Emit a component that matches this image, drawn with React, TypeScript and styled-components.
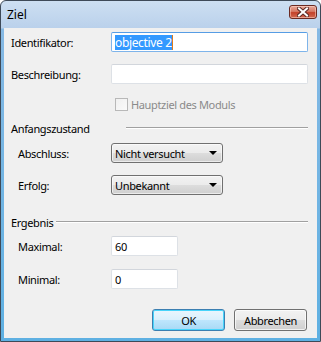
import React from "react";
import styled, { createGlobalStyle } from "styled-components";

const Global = createGlobalStyle`
  html, body { margin: 0; padding: 0; background: #fff; }
  body { font-family: "Noto Sans", "Segoe UI", sans-serif; font-size: 11px; letter-spacing: -0.35px; color: #000; }
  * { box-sizing: border-box; }
`;

const Window = styled.div`
  width: 321px;
  height: 342px;
  border: 1px solid #3e4a58;
  border-radius: 6px 6px 0 0;
  padding: 0 3px 3px 3px;
  display: flex;
  flex-direction: column;
  background: linear-gradient(to bottom, #cddff2 0px, #bad1eb 27px, #86b9e4 28px, #5eb0e2 100%);
`;

const TitleBar = styled.div`
  height: 27px;
  display: flex;
  justify-content: space-between;
  align-items: flex-start;
  padding-left: 3px;
`;

const Title = styled.span`
  font-size: 12px;
  letter-spacing: 0;
  line-height: 27px;
  color: #000;
`;

const CloseButton = styled.div`
  margin-top: 4px;
  width: 28px;
  height: 14px;
  border: 1px solid #6b2a22;
  border-radius: 3px;
  background: linear-gradient(to bottom, #e9a898 0%, #d67a66 45%, #c3412a 55%, #d26a52 100%);
  display: flex;
  align-items: center;
  justify-content: center;
  box-shadow: inset 0 0 0 1px rgba(255, 220, 210, 0.5);
`;

const Content = styled.div`
  flex: 1;
  background: #f0f0f0;
  padding: 4px 9px 0 7px;
  display: flex;
  flex-direction: column;
`;

const Row = styled.div<{ $mt: number; $indent?: number }>`
  display: flex;
  align-items: center;
  margin-top: ${(p) => p.$mt}px;
  padding-left: ${(p) => p.$indent || 0}px;
`;

const Label = styled.span<{ $w: number }>`
  width: ${(p) => p.$w}px;
  flex-shrink: 0;
  white-space: nowrap;
`;

const TextBox = styled.div<{ $w: number; $focus?: boolean }>`
  width: ${(p) => p.$w}px;
  height: 20px;
  background: #fff;
  border: 1px solid ${(p) => (p.$focus ? "#7eb4ea" : "#dde1e6")};
  border-top-color: ${(p) => (p.$focus ? "#569de5" : "#d2d6dc")};
  border-radius: 2px;
  display: flex;
  align-items: center;
  padding-left: 3px;
`;

const Selected = styled.span`
  background: #3399ff;
  color: #fff;
  line-height: 15px;
  border-right: 1px solid #e07b1a;
  font-size: 12px;
`;

const Plain = styled.span`
  font-size: 11px;
`;

const CheckRow = styled.div`
  display: flex;
  align-items: center;
  margin-top: 14px;
  padding-left: 104px;
  height: 13px;
  color: #8a8a8a;
`;

const CheckBox = styled.span`
  width: 13px;
  height: 13px;
  border: 1px solid #b8b8b8;
  background: linear-gradient(135deg, #f0f0f0, #fafafa);
  margin-right: 3px;
`;

const SectionRow = styled.div<{ $mt: number }>`
  display: flex;
  align-items: center;
  height: 16px;
  margin-top: ${(p) => p.$mt}px;
`;

const SectionLabel = styled.span<{ $w?: number }>`
  white-space: nowrap;
  ${(p) => (p.$w ? `width: ${p.$w}px;` : "margin-right: 3px;")}
  flex-shrink: 0;
`;

const Rule = styled.div`
  flex: 1;
  height: 2px;
  border-top: 1px solid #a0a0a0;
  border-bottom: 1px solid #ffffff;
  margin-top: -1px;
`;

const Combo = styled.div`
  width: 112px;
  height: 20px;
  border: 1px solid #707070;
  border-radius: 3px;
  background: linear-gradient(to bottom, #f2f2f2 0%, #ebebeb 50%, #dddddd 51%, #cfcfcf 100%);
  display: flex;
  align-items: center;
  justify-content: space-between;
  padding: 0 4px 0 3px;
  box-shadow: inset 0 0 0 1px rgba(255, 255, 255, 0.6);
`;

const Arrow = styled.span`
  width: 0;
  height: 0;
  border-left: 4px solid transparent;
  border-right: 4px solid transparent;
  border-top: 4px solid #000;
  margin-right: 1px;
`;

const ButtonRow = styled.div`
  display: flex;
  justify-content: flex-end;
  gap: 9px;
  margin-top: 20px;
  padding-right: 1px;
`;

const Button = styled.div<{ $default?: boolean }>`
  width: 73px;
  height: 22px;
  border: 1px solid ${(p) => (p.$default ? "#3c7fb1" : "#707070")};
  border-radius: 3px;
  display: flex;
  align-items: center;
  justify-content: center;
  background: ${(p) =>
    p.$default
      ? "linear-gradient(to bottom, #eaf6fd 0%, #d9f0fc 50%, #bee6fd 51%, #a7d9f5 100%)"
      : "linear-gradient(to bottom, #f2f2f2 0%, #ebebeb 50%, #dddddd 51%, #cfcfcf 100%)"};
  box-shadow: inset 0 0 0 1px ${(p) => (p.$default ? "#48d4fa" : "rgba(255,255,255,0.7)")};
`;

export default function App() {
  return (
    <>
      <Global />
      <Window>
        <TitleBar>
          <Title>Ziel</Title>
          <CloseButton>
            <svg width="12" height="10" viewBox="0 0 12 10">
              <path d="M2 1.5 L10 8.5 M10 1.5 L2 8.5" stroke="#5a2a26" strokeWidth="4" strokeLinecap="square" />
              <path d="M2 1.5 L10 8.5 M10 1.5 L2 8.5" stroke="#ffffff" strokeWidth="2" strokeLinecap="square" />
            </svg>
          </CloseButton>
        </TitleBar>
        <Content>
          <Row $mt={0}>
            <Label $w={100}>Identifikator:</Label>
            <TextBox $w={200} $focus>
              <Selected>objective 2</Selected>
            </TextBox>
          </Row>
          <Row $mt={12}>
            <Label $w={100}>Beschreibung:</Label>
            <TextBox $w={200} />
          </Row>
          <CheckRow>
            <CheckBox />
            Hauptziel des Moduls
          </CheckRow>
          <SectionRow $mt={9}>
            <SectionLabel $w={115}>Anfangszustand</SectionLabel>
            <Rule />
          </SectionRow>
          <Row $mt={7} $indent={7}>
            <Label $w={93}>Abschluss:</Label>
            <Combo>
              <Plain>Nicht versucht</Plain>
              <Arrow />
            </Combo>
          </Row>
          <Row $mt={12} $indent={7}>
            <Label $w={93}>Erfolg:</Label>
            <Combo>
              <Plain>Unbekannt</Plain>
              <Arrow />
            </Combo>
          </Row>
          <SectionRow $mt={19}>
            <SectionLabel>Ergebnis</SectionLabel>
            <Rule />
          </SectionRow>
          <Row $mt={6} $indent={7}>
            <Label $w={93}>Maximal:</Label>
            <TextBox $w={67}>
              <Plain>60</Plain>
            </TextBox>
          </Row>
          <Row $mt={13} $indent={7}>
            <Label $w={93}>Minimal:</Label>
            <TextBox $w={67}>
              <Plain>0</Plain>
            </TextBox>
          </Row>
          <ButtonRow>
            <Button $default>OK</Button>
            <Button>Abbrechen</Button>
          </ButtonRow>
        </Content>
      </Window>
    </>
  );
}
